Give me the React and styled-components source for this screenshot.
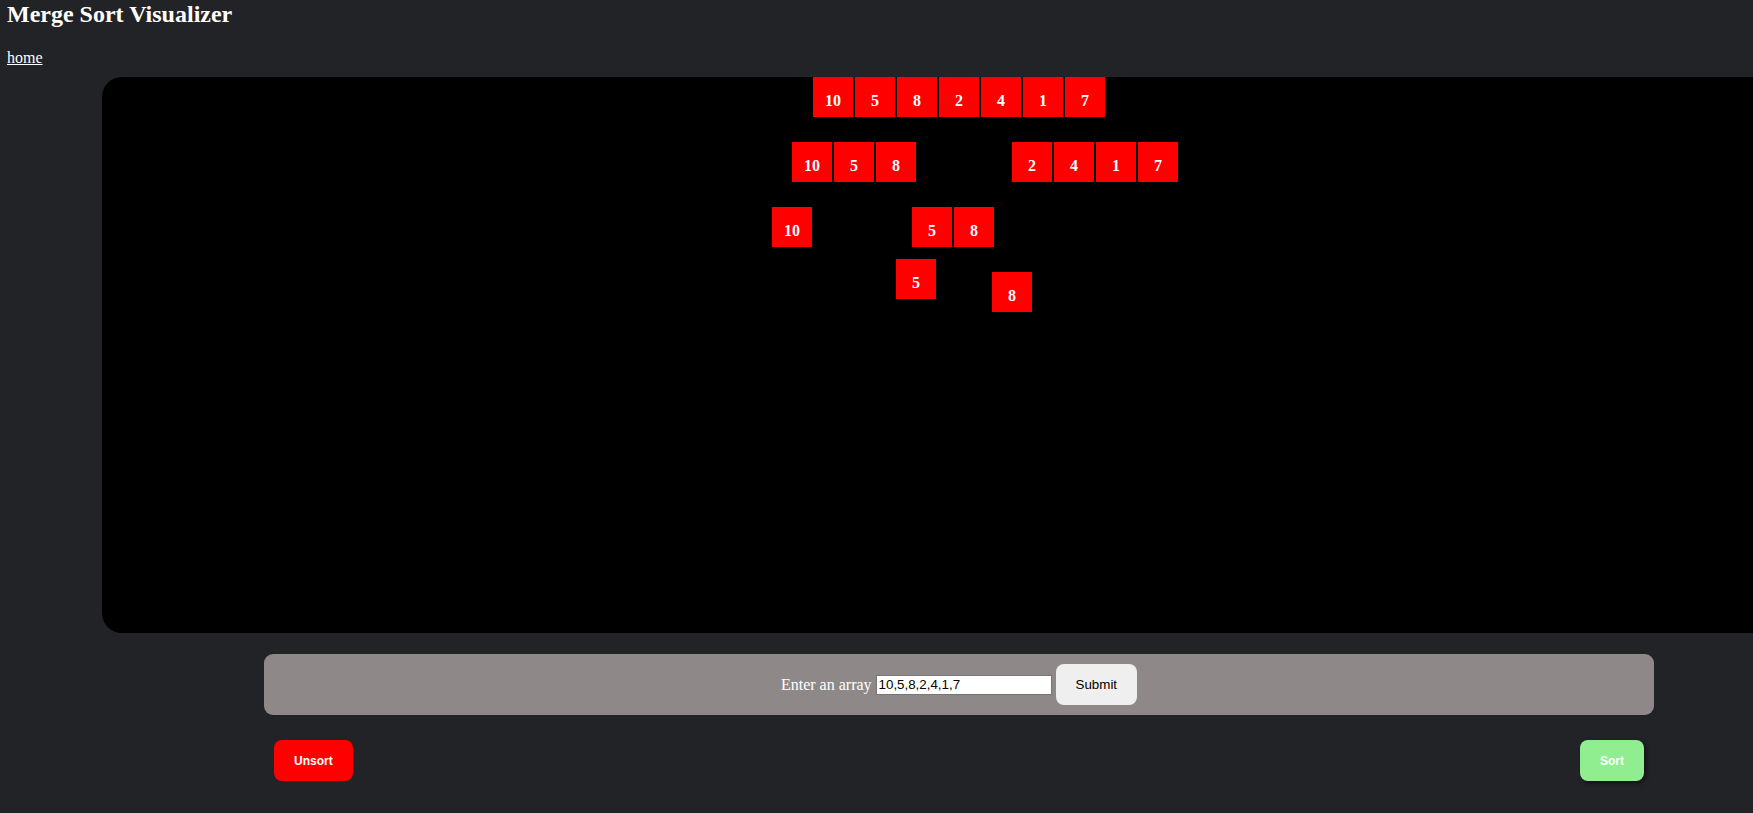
import React, { useState } from 'react';
import styled, { createGlobalStyle } from 'styled-components';

const GlobalStyle = createGlobalStyle`
  html, body {
    margin: 0;
    padding: 0;
    background: #222327;
    overflow: hidden;
  }
  body {
    font-family: 'Liberation Serif', 'Times New Roman', serif;
    color: #fff;
  }
`;

const Page = styled.div`
  padding: 1px 0 0 7px;
  min-height: 813px;
`;

const Title = styled.h2`
  font-size: 24px;
  font-weight: bold;
  margin: 0 0 21px;
  line-height: normal;
`;

const HomeLink = styled.a`
  color: #fff;
  font-size: 16px;
  text-decoration: underline;
`;

const Main = styled.div`
  margin: 10px 0 0 95px;
  width: 1714px;
`;

const Canvas = styled.div`
  position: relative;
  height: 556px;
  background: #000;
  border-radius: 20px;
`;

const Group = styled.div`
  position: absolute;
  display: flex;
  gap: 2px;
`;

const Box = styled.div`
  width: 40px;
  height: 40px;
  box-sizing: border-box;
  padding-top: 15px;
  background: #ff0000;
  color: #fff;
  font-size: 16px;
  font-weight: bold;
  text-align: center;
`;

const Panel = styled.form`
  width: 1390px;
  box-sizing: border-box;
  margin: 21px auto 0;
  padding: 10px;
  background: #8e8988;
  border-radius: 9px;
  text-align: center;
  font-size: 16px;
`;

const Label = styled.label`
  color: #fff;
  vertical-align: middle;
`;

const ArrayInput = styled.input`
  width: 176px;
  height: 20px;
  box-sizing: border-box;
  padding: 1px 2px;
  border: 1px solid #767676;
  font-family: 'Liberation Sans', Arial, sans-serif;
  font-size: 13.33px;
  color: #000;
  vertical-align: middle;
  margin: 0 4px;
`;

const Button = styled.button`
  height: 41px;
  padding: 0 20px;
  border: none;
  border-radius: 8px;
  font-family: 'Liberation Sans', Arial, sans-serif;
  font-size: ${(p) => (p.$bold ? '12px' : '13.33px')};
  font-weight: ${(p) => (p.$bold ? 'bold' : 'normal')};
  cursor: pointer;
  background: ${(p) => p.$bg || '#efefef'};
  color: ${(p) => p.$color || '#000'};
  box-shadow: ${(p) => (p.$shadow ? '2px 2px 4px rgba(0, 0, 0, 0.5)' : 'none')};
  vertical-align: middle;
`;

const Controls = styled.div`
  width: 1390px;
  box-sizing: border-box;
  margin: 25px auto 0;
  padding: 0 10px;
  display: flex;
  justify-content: space-between;
`;

const groups = [
  { left: 711, top: 0, values: [10, 5, 8, 2, 4, 1, 7] },
  { left: 690, top: 65, values: [10, 5, 8] },
  { left: 910, top: 65, values: [2, 4, 1, 7] },
  { left: 670, top: 130, values: [10] },
  { left: 810, top: 130, values: [5, 8] },
  { left: 794, top: 182, values: [5] },
  { left: 890, top: 195, values: [8] },
];

const App = () => {
  const [value, setValue] = useState('10,5,8,2,4,1,7');

  return (
    <Page>
      <GlobalStyle />
      <Title>Merge Sort Visualizer</Title>
      <HomeLink href="#">home</HomeLink>
      <Main>
        <Canvas>
          {groups.map((g, i) => (
            <Group key={i} style={{ left: g.left, top: g.top }}>
              {g.values.map((v, j) => (
                <Box key={j}>{v}</Box>
              ))}
            </Group>
          ))}
        </Canvas>
        <Panel onSubmit={(e) => e.preventDefault()}>
          <Label>Enter an array</Label>
          <ArrayInput value={value} onChange={(e) => setValue(e.target.value)} />
          <Button type="submit">Submit</Button>
        </Panel>
        <Controls>
          <Button $bg="#ff0000" $color="#fff" $bold>Unsort</Button>
          <Button $bg="#90ee90" $color="#fff" $bold $shadow>Sort</Button>
        </Controls>
      </Main>
    </Page>
  );
};

export default App;
